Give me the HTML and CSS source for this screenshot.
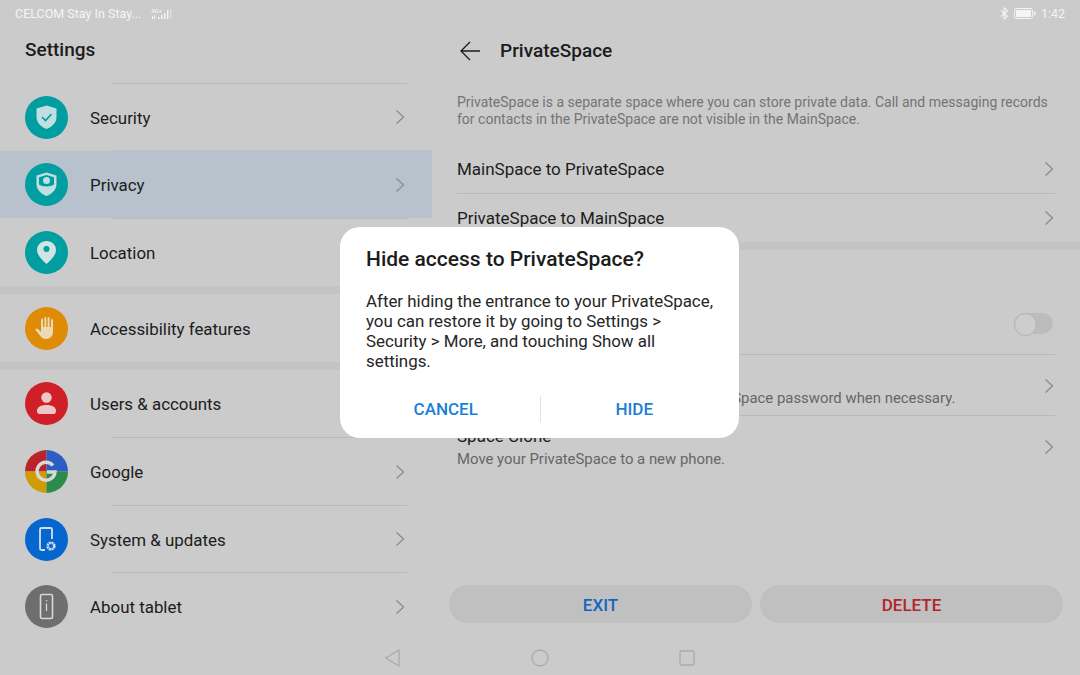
FILE: index.html
```html
<!DOCTYPE html>
<html lang="en">
<head>
    <meta charset="UTF-8">
    <meta name="viewport" content="width=device-width, initial-scale=1.0">
    <title>PrivateSpace</title>
    <link rel="stylesheet" href="styles.css">
</head>
<body>
    <div class="screen">
        <header class="status-bar">
            <div class="status-left">
                <span>CELCOM Stay In Stay...</span>
                <svg class="signal" width="22" height="13" viewBox="0 0 22 13">
                    <text x="0" y="5.5" class="signal-label">4G+</text>
                    <g fill="#f5f5f5">
                        <rect x="1" y="9" width="1" height="3"/>
                        <rect x="3" y="8" width="1" height="4"/>
                        <rect x="7" y="10" width="1.5" height="2"/>
                        <rect x="10" y="8" width="1.5" height="4"/>
                        <rect x="13" y="6" width="1.5" height="6"/>
                        <rect x="16" y="3" width="1.5" height="9"/>
                    </g>
                    <rect x="19" y="2" width="1.5" height="10" fill="#ddd"/>
                </svg>
            </div>
            <div class="status-right">
                <svg width="9" height="13" viewBox="0 0 9 13" fill="none" stroke="#f5f5f5" stroke-width="1.1">
                    <path d="M1 3.5 L7.5 9.3 L4.3 12 V1 L7.5 3.7 L1 9.5"/>
                </svg>
                <svg width="22" height="11" viewBox="0 0 22 11">
                    <rect x="0.5" y="0.5" width="18" height="10" rx="2" fill="none" stroke="#f5f5f5"/>
                    <rect x="2" y="2" width="15" height="7" rx="0.5" fill="#f5f5f5"/>
                    <rect x="20" y="3.5" width="1.5" height="4" fill="#f5f5f5"/>
                </svg>
                <span>1:42</span>
            </div>
        </header>

        <div class="main">
            <aside class="sidebar">
                <h1 class="sidebar-title">Settings</h1>
                <hr class="side-divider">

                <div class="side-row side-row-short">
                    <svg class="side-icon" viewBox="0 0 43 43">
                        <circle cx="21.5" cy="21.5" r="21.5" fill="#009da1"/>
                        <path d="M21.5 9.5 L31.5 12.5 V21 C31.5 27 26.5 31 21.5 33 C16.5 31 11.5 27 11.5 21 V12.5 Z" fill="#bfdfe0"/>
                        <path d="M17 21 L20.5 24.5 L26.5 18" fill="none" stroke="#009da1" stroke-width="1.6"/>
                    </svg>
                    <span class="side-label">Security</span>
                    <svg class="chevron" width="10" height="16" viewBox="0 0 10 16"><path d="M1.5 1.5 L8.5 8 L1.5 14.5"/></svg>
                </div>
                <hr class="side-divider side-divider-selected">

                <div class="side-row side-row-selected">
                    <svg class="side-icon" viewBox="0 0 43 43">
                        <circle cx="21.5" cy="21.5" r="21.5" fill="#009da1"/>
                        <path d="M21.5 9.5 L31.5 12.5 V21 C31.5 27 26.5 31 21.5 33 C16.5 31 11.5 27 11.5 21 V12.5 Z" fill="#bfdfe0"/>
                        <path d="M21.5 12 L29 14.3 V21.5 C26 24 17 24 14 21.5 V14.3 Z" fill="#009da1"/>
                        <circle cx="21.5" cy="17.5" r="3.5" fill="#bfdfe0"/>
                        <path d="M15 27 C17 23.5 26 23.5 28 27 C26 29.5 24 30.5 21.5 31.5 C19 30.5 17 29.5 15 27 Z" fill="#bfdfe0"/>
                    </svg>
                    <span class="side-label">Privacy</span>
                    <svg class="chevron" width="10" height="16" viewBox="0 0 10 16"><path d="M1.5 1.5 L8.5 8 L1.5 14.5"/></svg>
                </div>
                <hr class="side-divider">

                <div class="side-row">
                    <svg class="side-icon" viewBox="0 0 43 43">
                        <circle cx="21.5" cy="21.5" r="21.5" fill="#009da1"/>
                        <path d="M21.5 10 C27 10 31 14 31 19 C31 24 26 29 21.5 33 C17 29 12 24 12 19 C12 14 16 10 21.5 10 Z" fill="#cfe5e5"/>
                        <circle cx="21.5" cy="18" r="3" fill="#009da1"/>
                    </svg>
                    <span class="side-label">Location</span>
                </div>

                <div class="section-gap"></div>

                <div class="side-row side-row-tall">
                    <svg class="side-icon" viewBox="0 0 43 43">
                        <circle cx="21.5" cy="21.5" r="21.5" fill="#df8b05"/>
                        <g stroke="#ecd9b6" stroke-width="2" stroke-linecap="round" fill="none">
                            <path d="M17 21 V12.5"/>
                            <path d="M20.3 21 V11"/>
                            <path d="M23.6 21 V11"/>
                            <path d="M27 22 V13"/>
                            <path d="M11.5 22.5 L16 27"/>
                        </g>
                        <path d="M16 20 H28 V25 C28 29 25 32 21 32 C18 32 16 30 14.5 28 L10.8 23.3 L13 22 L16 25 Z" fill="#ecd9b6"/>
                    </svg>
                    <span class="side-label">Accessibility features</span>
                </div>

                <div class="section-gap"></div>

                <div class="side-row">
                    <svg class="side-icon" viewBox="0 0 43 43">
                        <circle cx="21.5" cy="21.5" r="21.5" fill="#cf2027"/>
                        <circle cx="21.5" cy="15.5" r="5.2" fill="#ecc9c9"/>
                        <path d="M12 29 C12 25 16 23 21.5 23 C27 23 31 25 31 29 C31 31 30 32 28.5 32 H14.5 C13 32 12 31 12 29 Z" fill="#ecc9c9"/>
                    </svg>
                    <span class="side-label">Users &amp; accounts</span>
                </div>
                <hr class="side-divider">

                <div class="side-row">
                    <svg class="side-icon" viewBox="0 0 43 43">
                        <path d="M21.5 21.5 V0 A21.5 21.5 0 0 0 0 21.5 Z" fill="#b82428"/>
                        <path d="M21.5 21.5 V0 A21.5 21.5 0 0 1 43 21.5 Z" fill="#2d5cc4"/>
                        <path d="M21.5 21.5 H0 A21.5 21.5 0 0 0 21.5 43 Z" fill="#cf9c08"/>
                        <path d="M21.5 21.5 H43 A21.5 21.5 0 0 1 21.5 43 Z" fill="#2b8c49"/>
                        <path d="M28 15.5 A9 9 0 1 0 30 22 H22" fill="none" stroke="#d8d8d8" stroke-width="3.4"/>
                    </svg>
                    <span class="side-label">Google</span>
                    <svg class="chevron" width="10" height="16" viewBox="0 0 10 16"><path d="M1.5 1.5 L8.5 8 L1.5 14.5"/></svg>
                </div>
                <hr class="side-divider">

                <div class="side-row side-row-short">
                    <svg class="side-icon" viewBox="0 0 43 43">
                        <circle cx="21.5" cy="21.5" r="21.5" fill="#0566d0"/>
                        <path d="M20 32 H16.5 C15.5 32 15 31.5 15 30.5 V11.5 C15 10.5 15.5 10 16.5 10 H25.5 C26.5 10 27 10.5 27 11.5 V21" fill="none" stroke="#d0dff0" stroke-width="1.8"/>
                        <circle cx="26" cy="28" r="3.3" fill="none" stroke="#d0dff0" stroke-width="2.6" stroke-dasharray="2 0.6"/>
                    </svg>
                    <span class="side-label">System &amp; updates</span>
                    <svg class="chevron" width="10" height="16" viewBox="0 0 10 16"><path d="M1.5 1.5 L8.5 8 L1.5 14.5"/></svg>
                </div>
                <hr class="side-divider">

                <div class="side-row">
                    <svg class="side-icon" viewBox="0 0 43 43">
                        <circle cx="21.5" cy="21.5" r="21.5" fill="#6e6e6e"/>
                        <rect x="15.5" y="9.5" width="12" height="24" rx="1.5" fill="none" stroke="#d8d8d8" stroke-width="1.6"/>
                        <path d="M21.5 15 V16.3 M21.5 18.5 V26" stroke="#d8d8d8" stroke-width="1.3"/>
                    </svg>
                    <span class="side-label">About tablet</span>
                    <svg class="chevron" width="10" height="16" viewBox="0 0 10 16"><path d="M1.5 1.5 L8.5 8 L1.5 14.5"/></svg>
                </div>
            </aside>

            <section class="detail">
                <div class="detail-header">
                    <svg class="back-arrow" width="20" height="20" viewBox="0 0 20 20" fill="none" stroke="#1c1c1c" stroke-width="1.3">
                        <path d="M10 1 L1 10 L10 19 M1 10 H20"/>
                    </svg>
                    <h2 class="detail-title">PrivateSpace</h2>
                </div>
                <p class="intro">PrivateSpace is a separate space where you can store private data. Call and messaging records for contacts in the PrivateSpace are not visible in the MainSpace.</p>

                <div class="detail-group">
                    <div class="detail-row">
                        <span class="detail-label">MainSpace to PrivateSpace</span>
                        <svg class="chevron" width="10" height="16" viewBox="0 0 10 16"><path d="M1.5 1.5 L8.5 8 L1.5 14.5"/></svg>
                    </div>
                    <hr class="detail-divider">
                    <div class="detail-row">
                        <span class="detail-label">PrivateSpace to MainSpace</span>
                        <svg class="chevron" width="10" height="16" viewBox="0 0 10 16"><path d="M1.5 1.5 L8.5 8 L1.5 14.5"/></svg>
                    </div>
                </div>

                <div class="section-gap"></div>

                <div class="detail-group detail-group-lower">
                    <div class="detail-row detail-row-toggle">
                        <span class="toggle"></span>
                    </div>
                    <hr class="detail-divider">
                    <div class="detail-row detail-row-double">
                        <div class="detail-text">
                            <span class="detail-label">Change password</span>
                            <span class="detail-sub">Set a secret question to reset your PrivateSpace password when necessary.</span>
                        </div>
                        <svg class="chevron" width="10" height="16" viewBox="0 0 10 16"><path d="M1.5 1.5 L8.5 8 L1.5 14.5"/></svg>
                    </div>
                    <hr class="detail-divider">
                    <div class="detail-row detail-row-double">
                        <div class="detail-text">
                            <span class="detail-label">Space Clone</span>
                            <span class="detail-sub">Move your PrivateSpace to a new phone.</span>
                        </div>
                        <svg class="chevron" width="10" height="16" viewBox="0 0 10 16"><path d="M1.5 1.5 L8.5 8 L1.5 14.5"/></svg>
                    </div>
                </div>

                <div class="actions">
                    <button class="action action-exit">EXIT</button>
                    <button class="action action-delete">DELETE</button>
                </div>
            </section>
        </div>

        <footer class="nav-bar">
            <svg width="17" height="18" viewBox="0 0 17 18" fill="none" stroke="#ababab" stroke-width="1.3">
                <path d="M15 1 V17 L1.5 9 Z" stroke-linejoin="round"/>
            </svg>
            <svg width="18" height="18" viewBox="0 0 18 18" fill="none" stroke="#ababab" stroke-width="1.3">
                <circle cx="9" cy="9" r="8"/>
            </svg>
            <svg width="16" height="16" viewBox="0 0 16 16" fill="none" stroke="#ababab" stroke-width="1.3">
                <rect x="1" y="1" width="14" height="14" rx="1"/>
            </svg>
        </footer>
    </div>

    <!-- Dialog -->
    <div class="overlay">
        <div class="dialog">
            <h3 class="dialog-title">Hide access to PrivateSpace?</h3>
            <p class="dialog-text">After hiding the entrance to your PrivateSpace, you can restore it by going to Settings &gt; Security &gt; More, and touching Show all settings.</p>
            <div class="dialog-buttons">
                <button class="dialog-button">CANCEL</button>
                <span class="dialog-split"></span>
                <button class="dialog-button">HIDE</button>
            </div>
        </div>
    </div>
</body>
</html>
```

FILE: styles.css
```css
* {
    box-sizing: border-box;
}

body {
    font-family: Roboto, "Liberation Sans", sans-serif;
    margin: 0;
    padding: 0;
    background-color: #cbcbcb;
    color: #1c1c1c;
    overflow: hidden;
}

.screen {
    width: 1080px;
    height: 675px;
    display: flex;
    flex-direction: column;
}

.status-bar {
    height: 26px;
    padding: 0 15px;
    display: flex;
    justify-content: space-between;
    align-items: center;
    font-size: 12.5px;
    color: #f5f5f5;
}

.status-left,
.status-right {
    display: flex;
    align-items: center;
}

.status-left {
    gap: 10px;
}

.status-right {
    gap: 5px;
}

.signal-label {
    font-size: 6px;
    font-weight: 500;
    fill: #f5f5f5;
}

.main {
    flex: 1;
    display: flex;
    min-height: 0;
}

.sidebar {
    width: 432px;
    flex-shrink: 0;
}

.sidebar-title {
    margin: 0;
    height: 57px;
    padding: 12px 0 0 25px;
    font-size: 19px;
    line-height: 24px;
    font-weight: 500;
}

.side-divider {
    height: 1px;
    margin: 0 25px 0 111px;
    border: 0;
    background-color: #b9b9b9;
}

.side-divider-selected {
    margin-right: 0;
    background-color: #b7c2cc;
}

.side-row {
    height: 67px;
    padding: 0 27px 0 25px;
    display: flex;
    align-items: center;
}

.side-row-short {
    height: 66px;
}

.side-row-tall {
    height: 68px;
}

.side-row-selected {
    background-color: #b7c2cc;
}

.side-icon {
    width: 43px;
    height: 43px;
    flex-shrink: 0;
}

.side-label {
    flex: 1;
    margin-left: 22px;
    padding-top: 1px;
    font-size: 16.9px;
}

.chevron {
    flex-shrink: 0;
    fill: none;
    stroke: #8c8c8c;
    stroke-width: 1.3;
}

.section-gap {
    height: 8px;
    background-color: #c4c4c4;
}

.detail {
    flex: 1;
    display: flex;
    flex-direction: column;
    min-width: 0;
}

.detail-header {
    height: 49px;
    padding-left: 28px;
    display: flex;
    align-items: center;
    gap: 20px;
}

.detail-title {
    margin: 0;
    font-size: 19px;
    font-weight: 500;
}

.intro {
    margin: 0;
    height: 70px;
    padding: 19px 25px 0;
    font-size: 14px;
    line-height: 16.5px;
    color: #747474;
}

.detail-group {
    padding: 0 25px;
}

.detail-row {
    height: 48px;
    padding-right: 1px;
    display: flex;
    align-items: center;
    justify-content: space-between;
}

.detail-label {
    font-size: 17px;
}

.detail-divider {
    height: 1px;
    margin: 0;
    border: 0;
    background-color: #b9b9b9;
}

.detail-group-lower {
    padding-top: 42px;
}

.detail-row-toggle {
    height: 62px;
    justify-content: flex-end;
}

.detail-row-double {
    height: 60px;
    padding-top: 2px;
}

.detail-text {
    display: flex;
    flex-direction: column;
    gap: 4px;
}

.detail-sub {
    font-size: 14.9px;
    color: #666;
}

.toggle {
    position: relative;
    width: 39px;
    height: 21px;
    margin-right: 1px;
    border-radius: 11px;
    background-color: #bcbcbc;
}

/* knob */
.toggle::after {
    content: "";
    position: absolute;
    left: 0;
    top: 0;
    width: 21px;
    height: 21px;
    border: 1px solid #b2b2b2;
    border-radius: 50%;
    background-color: #cdcdcd;
}

.actions {
    margin-top: auto;
    padding: 0 17px 17px;
    display: flex;
    gap: 8px;
}

.action {
    flex: 1;
    height: 38px;
    padding-top: 2px;
    border: 0;
    border-radius: 19px;
    background-color: #c0c0c0;
    font-family: inherit;
    font-size: 17px;
    font-weight: 500;
}

.action-exit {
    color: #1565c0;
}

.action-delete {
    color: #b3262b;
}

.nav-bar {
    height: 35px;
    padding-right: 1px;
    display: flex;
    justify-content: center;
    align-items: center;
    gap: 130px;
}

.overlay {
    position: fixed;
    top: 0;
    left: 0;
    width: 100%;
    height: 100%;
    padding: 0 1px 10px 0;
    display: flex;
    justify-content: center;
    align-items: center;
}

.dialog {
    width: 399px;
    height: 211px;
    padding: 19px 21px 0 26px;
    border-radius: 20px;
    background-color: #fff;
}

.dialog-title {
    margin: 0;
    font-size: 21px;
    line-height: 26px;
    font-weight: 500;
}

.dialog-text {
    margin: 19px 0 0;
    font-size: 16.9px;
    line-height: 20px;
    color: #262626;
}

.dialog-buttons {
    margin: 25px -10px 0 -14px;
    display: flex;
    align-items: center;
}

.dialog-button {
    flex: 1;
    height: 26px;
    border: 0;
    background: none;
    font-family: inherit;
    font-size: 17px;
    font-weight: 500;
    color: #1a7fd6;
}

.dialog-split {
    width: 1px;
    height: 26px;
    background-color: #e2e2e2;
}
```
